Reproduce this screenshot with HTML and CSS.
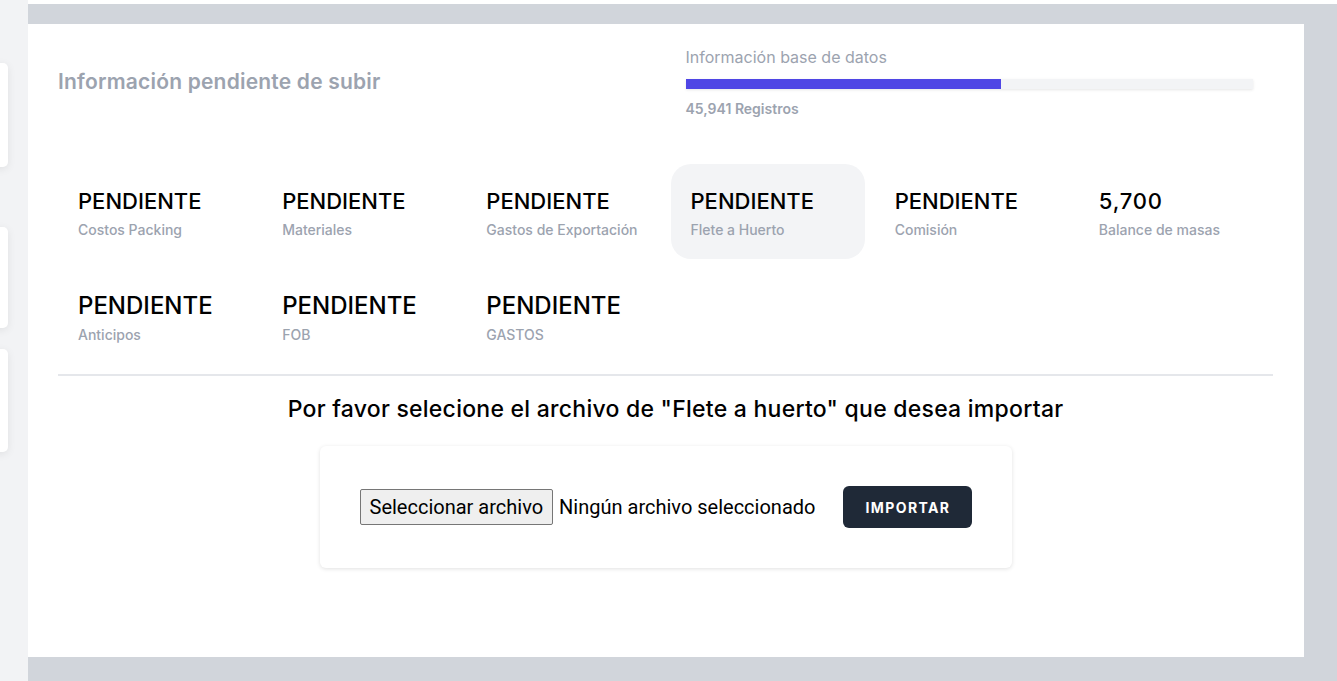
FILE: index.html
```html
<!DOCTYPE html>
<html lang="es">
<head>
<meta charset="utf-8">
<title>Importar</title>
<link rel="stylesheet" href="styles.css">
</head>
<body>
<div class="app">
  <aside class="sidebar">
    <div class="side-card card-a"></div>
    <div class="side-card card-b"></div>
    <div class="side-card card-c"></div>
  </aside>
  <main class="main">
    <section class="panel">
      <header class="head">
        <h1 class="head-title">Información pendiente de subir</h1>
        <div class="db-info">
          <div class="db-label">Información base de datos</div>
          <div class="bar"><div class="bar-fill" style="width:55.6%"></div></div>
          <div class="db-count">45,941 Registros</div>
        </div>
      </header>

      <div class="stats">
        <div class="stat"><div class="stat-value">PENDIENTE</div><div class="stat-label">Costos Packing</div></div>
        <div class="stat"><div class="stat-value">PENDIENTE</div><div class="stat-label">Materiales</div></div>
        <div class="stat"><div class="stat-value">PENDIENTE</div><div class="stat-label">Gastos de Exportación</div></div>
        <div class="stat active"><div class="stat-value">PENDIENTE</div><div class="stat-label">Flete a Huerto</div></div>
        <div class="stat"><div class="stat-value">PENDIENTE</div><div class="stat-label">Comisión</div></div>
        <div class="stat"><div class="stat-value num">5,700</div><div class="stat-label">Balance de masas</div></div>
        <div class="stat big"><div class="stat-value">PENDIENTE</div><div class="stat-label">Anticipos</div></div>
        <div class="stat big"><div class="stat-value">PENDIENTE</div><div class="stat-label">FOB</div></div>
        <div class="stat big"><div class="stat-value">PENDIENTE</div><div class="stat-label">GASTOS</div></div>
      </div>

      <hr class="divider">

      <h2 class="import-title">Por favor selecione el archivo de "Flete a huerto" que desea importar</h2>

      <div class="import-card">
        <div class="file-input">
          <button class="file-btn" type="button">Seleccionar archivo</button>
          <span class="file-name">Ningún archivo seleccionado</span>
        </div>
        <button class="import-btn" type="button">IMPORTAR</button>
      </div>
    </section>
  </main>
</div>
</body>
</html>
```
FILE: styles.css
```css
* { box-sizing: border-box; }
html, body { margin: 0; padding: 0; }
body {
  background: #ffffff;
  font-family: "Inter", "Liberation Sans", sans-serif;
  color: #000;
  width: 1337px;
  height: 681px;
  overflow: hidden;
}
.app {
  display: flex;
  height: 681px;
}
.sidebar {
  width: 28px;
  flex: 0 0 28px;
  background: #f2f3f5;
  overflow: hidden;
  padding-top: 63px;
  display: flex;
  flex-direction: column;
}
.side-card {
  width: 200px;
  margin-left: -192px;
  background: #fff;
  border-radius: 5px;
  box-shadow: 0 2px 8px rgba(0,0,0,0.08);
}
.card-a { height: 104px; }
.card-b { height: 101px; margin-top: 60px; }
.card-c { height: 103px; margin-top: 21px; }

.main {
  flex: 1;
  background: #d1d5db;
  margin-top: 4px;
  padding: 20px 33px 24px 0;
  display: flex;
}
.panel {
  flex: 1;
  background: #fff;
  padding: 24px 31px 0 30px;
  display: flex;
  flex-direction: column;
}
.head {
  display: grid;
  grid-template-columns: 1fr 1fr;
  column-gap: 40px;
  align-items: center;
}
.head-title {
  margin: 0 0 4px 0;
  font-size: 21px;
  line-height: 28px;
  font-weight: 600;
  color: #9ca3af;
  letter-spacing: 0.2px;
}
.db-info {
  padding-right: 20px;
}
.db-label {
  font-size: 16px;
  line-height: 20px;
  color: #9ca3af;
  font-weight: 400;
  margin-top: -1px;
}
.bar {
  margin-top: 12px;
  height: 10px;
  background: #f3f4f6;
  box-shadow: 0 1px 3px rgba(0,0,0,0.1);
}
.bar-fill {
  height: 100%;
  background: #4f46e5;
}
.db-count {
  margin-top: 10px;
  font-size: 14px;
  line-height: 20px;
  font-weight: 600;
  color: #9ca3af;
}

.stats {
  margin-top: 45px;
  display: grid;
  grid-template-columns: repeat(6, 1fr);
  column-gap: 10px;
  row-gap: 10px;
}
.stat {
  padding: 23px 20px 23px 20px;
  border-radius: 20px;
  height: 95px;
}
.stat.active { background: #f3f4f6; }
.stat-value {
  font-size: 22px;
  line-height: 28px;
  font-weight: 500;
  color: #000;
  white-space: nowrap;
}
.stat-value.num { letter-spacing: 0.8px; }
.stat.big .stat-value {
  font-size: 24px;
}
.stat-label {
  margin-top: 5px;
  font-size: 14px;
  line-height: 20px;
  font-weight: 500;
  color: #9ca3af;
  white-space: nowrap;
}

.divider {
  margin: 10px 0 0 0;
  border: 0;
  height: 2px;
  background: #e5e7eb;
}
.import-title {
  margin: 18px 0 0 0;
  padding-left: 20px;
  text-align: center;
  font-size: 23px;
  line-height: 30px;
  font-weight: 500;
  color: #000;
  letter-spacing: 0.25px;
}
.import-card {
  align-self: center;
  margin-top: 22px;
  width: 692px;
  height: 122px;
  background: #fff;
  border-radius: 6px;
  box-shadow: 0 1px 4px rgba(0,0,0,0.12);
  padding: 0 40px;
  display: flex;
  align-items: center;
  gap: 28px;
}
.file-input {
  display: flex;
  align-items: center;
  gap: 6px;
  flex-shrink: 0;
  white-space: nowrap;
  font-family: "Roboto", "Liberation Sans", sans-serif;
  font-size: 20px;
}
.file-btn {
  font-family: "Roboto", "Liberation Sans", sans-serif;
  font-size: 20px;
  white-space: nowrap;
  flex-shrink: 0;
  height: 36px;
  padding: 0 9px;
  background: #efefef;
  border: 1px solid #767676;
  border-radius: 2px;
  color: #000;
}
.file-name {
  color: #000;
}
.import-btn {
  flex-shrink: 0;
  height: 42px;
  width: 129px;
  background: #1f2937;
  color: #fff;
  border: 0;
  border-radius: 6px;
  font-family: "Inter", "Liberation Sans", sans-serif;
  font-size: 14px;
  font-weight: 700;
  letter-spacing: 1.4px;
}
```
